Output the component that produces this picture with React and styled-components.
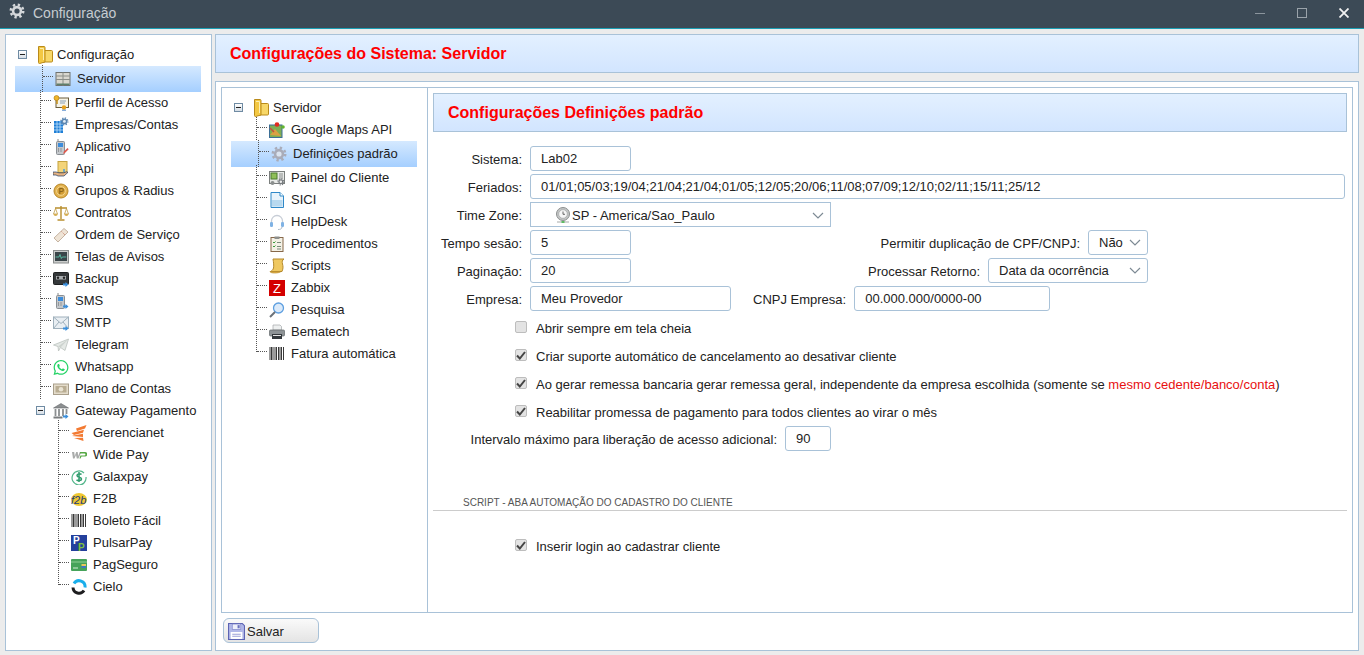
import React from "react";
import styled, { createGlobalStyle } from "styled-components";
import { FaWhatsapp } from "react-icons/fa";

const GlobalStyle = createGlobalStyle`
  html, body {
    margin: 0;
    height: 100%;
    overflow: hidden;
    background: #ececec;
    font-family: "Liberation Sans", Arial, sans-serif;
    font-size: 13px;
    color: #222;
  }
`;

const Svg = ({ children, size = 16 }) => (
  <svg width={size} height={size} viewBox="0 0 16 16">{children}</svg>
);

const Arrow = () => (
  <path d="M10 12.500h2.500V11l3 2.500-3 2.500v-1.500H10z" fill="#3b8fdc" />
);

const Gear = ({ c = "#8d93a6", hole = "#fff" }) => (
  <>
    <circle cx="8" cy="8" r="6.200" fill="none" stroke={c} strokeWidth="2.600" strokeDasharray="2.300 2.570" />
    <circle cx="8" cy="8" r="5.200" fill={c} />
    <circle cx="8" cy="8" r="2.600" fill={hole} />
  </>
);

const PhoneBody = () => (
  <>
    <path d="M5 0v3" stroke="#888" />
    <rect x="3.500" y="2.500" width="8" height="13" rx="1" fill="#c4c8cc" stroke="#8a8f94" />
    <rect x="5" y="4" width="5" height="4" fill="#3d8ddb" />
    <path d="M5 10h1m1.500 0h1m-3.500 2h1m1.500 0h1" stroke="#666" />
  </>
);

const Barcode = () => (
  <path d="M1 1v13M2.500 1v13M4 1v13M6 1v13M7.500 1v13M9.500 1v13M11 1v13M12.500 1v13M14.500 1v13" stroke="#222" strokeWidth=".9" />
);

const icons = {
  folder: (
    <svg width="16" height="18" viewBox="0 0 16 18">
      <path d="M6 4.500h8.500a1 1 0 0 1 1 1V15a1 1 0 0 1-1 1H6z" fill="#f7d768" stroke="#b98a1a" />
      <path d="M1.500.500H7a1 1 0 0 1 1 1V16l-5.500 1.500a1 1 0 0 1-1-1z" fill="#f3c843" stroke="#b98a1a" />
      <path d="M3 2.500h3.500V14" fill="none" stroke="#fdeeb0" />
    </svg>
  ),
  server: (
    <Svg>
      <rect x="1" y="1.500" width="14" height="13" fill="#d9d7cf" stroke="#6f7370" />
      <path d="M8 1.500v13M1 5h14M1 8.500h14" stroke="#8b8e88" />
      <path d="M1.500 12.500h13v1.500h-13z" fill="#5f7f6a" />
    </Svg>
  ),
  profile: (
    <Svg>
      <rect x="3" y="3" width="12.500" height="9.500" fill="#f6f3e6" stroke="#6b5d3c" />
      <path d="M7 6h6M7 8h5" stroke="#8aa0b8" />
      <circle cx="3.500" cy="3" r="2.500" fill="#f0b62a" stroke="#a8760e" strokeWidth=".6" />
      <path d="M4 5v4" stroke="#c48f19" strokeWidth="1.500" />
      <circle cx="11" cy="12.500" r="2.200" fill="#e8a21c" />
      <path d="M10 14.500v1.500m2-1.500v1.500" stroke="#3978c4" strokeWidth="1.200" />
    </Svg>
  ),
  company: (
    <Svg>
      <rect x="1" y="4" width="9" height="12" fill="#1f7fd6" />
      <path d="M1 7h9M1 10h9M1 13h9M4 4v12M7 4v12" stroke="#bfe0fa" strokeWidth=".8" />
      <g transform="translate(7 0) scale(.55)"><Gear c="#5c86b0" hole="#dfeaf4" /></g>
    </Svg>
  ),
  app: (
    <Svg>
      <PhoneBody />
      <path d="M10 15l1-2.500 3.500-3.500 1.200 1.200-3.500 3.500z" fill="#e0574b" />
    </Svg>
  ),
  api: (
    <Svg>
      <rect x="5" y="0.500" width="9" height="11" fill="#f3d479" stroke="#c5a340" />
      <path d="M0 11h3l3 .8h4.500l3-1 1.500.5-4 3.700H5l-2-1H0z" fill="#e6b382" stroke="#203c66" strokeWidth=".7" />
      <path d="M11 8v3" stroke="#4a9cd8" strokeWidth="1.500" />
    </Svg>
  ),
  coin: (
    <Svg>
      <circle cx="8" cy="8" r="7" fill="#e2b14e" stroke="#b78625" />
      <circle cx="8" cy="8" r="4.300" fill="#d39d34" stroke="#f4d790" />
      <path d="M6.800 11V5.500h2a1.500 1.500 0 0 1 0 3h-2" fill="none" stroke="#8d661c" strokeWidth="1.100" />
    </Svg>
  ),
  scales: (
    <Svg>
      <path d="M8 1v13M4.500 15h7M2 3h12" stroke="#b98f2e" strokeWidth="1.400" />
      <path d="M2.500 3.500L.5 9h4zM13.500 3.500L11.500 9h4z" fill="none" stroke="#b98f2e" strokeWidth=".7" />
      <path d="M.5 9h4.200a2 2 0 0 1-4.200 0zM11.300 9h4.200a2 2 0 0 1-4.200 0z" fill="#d6ae52" />
    </Svg>
  ),
  ticket: (
    <Svg>
      <path d="M1 11L11 1.500l4 3.500L5 15z" fill="#efe4d6" stroke="#c6b4a2" />
      <path d="M8.500 4.500l3.500 3.500" stroke="#c9826d" strokeDasharray="1 1" />
    </Svg>
  ),
  monitor: (
    <Svg>
      <rect x=".5" y="1.500" width="15" height="12.500" fill="#c9cbca" stroke="#8b8e8e" />
      <rect x="2" y="3" width="12" height="9" fill="#3a4549" />
      <path d="M2.500 8h3.500l1-2.500 1.300 4 1-1.500h4" fill="none" stroke="#5ed0b4" strokeWidth=".8" />
    </Svg>
  ),
  backup: (
    <Svg>
      <rect x=".5" y="1.500" width="15" height="12" rx="1" fill="#35383a" stroke="#1f2122" />
      <rect x="3" y="5" width="10" height="3.500" fill="#a9adb0" />
      <circle cx="5" cy="6.700" r="1.200" fill="#222" />
      <circle cx="11" cy="6.700" r="1.200" fill="#222" />
      <Arrow />
    </Svg>
  ),
  sms: (
    <Svg>
      <PhoneBody />
      <Arrow />
    </Svg>
  ),
  smtp: (
    <Svg>
      <rect x=".5" y="2" width="15" height="11.500" fill="#e9eef2" stroke="#9fb0bc" />
      <path d="M.5 2L8 8.500 15.500 2M.5 13.500L6 7M15.500 13.500L10 7" fill="none" stroke="#9fb0bc" />
      <Arrow />
    </Svg>
  ),
  telegram: (
    <Svg>
      <path d="M.5 8L15.500 2 12 13.500 7.500 10.500 5.500 14 5 9.500z" fill="#e5e9e6" stroke="#b5bcb8" strokeWidth=".7" />
      <path d="M5 9.500L15.500 2 7.500 10.500" fill="#cdd3cf" />
    </Svg>
  ),
  money: (
    <Svg>
      <rect x=".5" y="3" width="15" height="10.500" fill="#e4dccb" stroke="#a99f8b" />
      <rect x="2.500" y="5" width="11" height="6.500" fill="#b9ad93" />
      <circle cx="8" cy="8.200" r="2.300" fill="#e9e3d3" />
    </Svg>
  ),
  bank: (
    <Svg>
      <path d="M8 .5L15.500 5h-15z" fill="#8c8f91" stroke="#66696b" strokeWidth=".6" />
      <path d="M2.500 6v7M6 6v7M10 6v7M13.500 6v5" stroke="#8c8f91" strokeWidth="1.800" />
      <path d="M.5 13.500h9v2h-9z" fill="#7a7d7f" />
      <Arrow />
    </Svg>
  ),
  gerencianet: (
    <Svg>
      <path d="M5 3.500L15.500 0l-1.500 3.500-8 2.500zM.5 8L13 4.800 12 7.800 3 10zM2.500 10.500L12 8.800v3.200L1 11zM3 13l9-.3.500 3.300z" fill="#f37a32" />
    </Svg>
  ),
  widepay: (
    <Svg>
      <path d="M1 5h2.200l.5 4 1.500-4h1.500l.5 4 1.500-4h1.600l-2.800 6.500H5.800L5 8l-1.500 3.500H2z" fill="#a9abaa" />
      <path d="M9 5h5a2.200 2.200 0 0 1 0 4.500h-3.500l-1 2H8.500l.9-3h4a.8.8 0 0 0 0-2H9z" fill="#56a844" />
    </Svg>
  ),
  galaxpay: (
    <Svg>
      <path d="M13 4A7 7 0 1 0 15 8" fill="none" stroke="#55b78c" strokeWidth="1.200" />
      <path d="M10.500 5.500C9.500 4.500 6 4.500 6 6.500S10.500 8 10.500 10 7 12 5.500 10.800M8 3v10" fill="none" stroke="#2f9b6d" strokeWidth="1.500" />
    </Svg>
  ),
  f2b: (
    <Svg>
      <ellipse cx="8" cy="8.500" rx="8" ry="6.500" fill="#efc731" />
      <text x="0" y="13" fontSize="11" fontStyle="italic" fontFamily="Liberation Sans" fill="#1d3b7a">f2b</text>
    </Svg>
  ),
  barcode: (
    <Svg><Barcode /></Svg>
  ),
  pulsar: (
    <Svg>
      <rect width="16" height="16" fill="#24409c" />
      <text x="2" y="9" fontSize="10" fontWeight="700" fontFamily="Liberation Sans" fill="#fff">P</text>
      <text x="7" y="15.500" fontSize="10" fontWeight="700" fontFamily="Liberation Sans" fill="#7ec23c">P</text>
    </Svg>
  ),
  pagseguro: (
    <Svg>
      <rect y="2" width="16" height="12" rx="1" fill="#46a35a" />
      <path d="M0 5h16" stroke="#8ecf94" />
      <path d="M2 11h5" stroke="#d3efd6" />
      <rect x="10.500" y="7" width="4.500" height="2" fill="#e9c75b" />
      <rect x="10.500" y="9" width="4.500" height="2" fill="#3e78c0" />
    </Svg>
  ),
  cielo: (
    <Svg>
      <path d="M2 8.500A6 6 0 0 0 13 11.500" fill="none" stroke="#1d1d1f" strokeWidth="3" />
      <path d="M3 4.500A6 6 0 0 1 14 8.500" fill="none" stroke="#19aeeb" strokeWidth="3" />
    </Svg>
  ),
  maps: (
    <Svg>
      <rect x=".5" y="3" width="12.500" height="12.500" fill="#7fae54" stroke="#3c6f96" />
      <path d="M1 13l5-6 6 7z" fill="#d9a144" />
      <path d="M1 6l4 4" stroke="#c94d3c" strokeWidth="1.500" />
      <circle cx="8" cy="2.500" r="2.300" fill="#e02b20" />
      <circle cx="14" cy="5" r="1.800" fill="#62b52e" />
    </Svg>
  ),
  gear: (
    <Svg size={18}><Gear c="#a9acb9" hole="#dbe4f0" /></Svg>
  ),
  panel: (
    <Svg>
      <rect x=".5" y="1.500" width="15" height="12" fill="#e8eae8" stroke="#7b7f7d" />
      <rect x="2" y="3" width="6" height="6" fill="#8fbf58" stroke="#4b7b2c" />
      <path d="M10 4h4M10 6h4M10 8h4" stroke="#8b8f8e" />
      <g transform="translate(8 8) scale(.48)"><Gear c="#777b7f" hole="#eee" /></g>
      <circle cx="3.500" cy="13" r="2" fill="#8b8f8e" />
    </Svg>
  ),
  doc: (
    <Svg>
      <path d="M2 .5h9l3.500 3.500v11.500H2z" fill="#e8f3fb" stroke="#2f88c8" />
      <path d="M3 8h10.500v6.500H3z" fill="#b8d9ef" />
      <path d="M11 .5V4h3.500" fill="#fff" stroke="#2f88c8" />
    </Svg>
  ),
  headset: (
    <Svg>
      <path d="M2.500 9V7a5.500 5.500 0 0 1 11 0v2" fill="none" stroke="#c7cdd6" strokeWidth="1.300" />
      <rect x="1" y="8" width="3" height="5" rx="1.200" fill="#7fb2e4" />
      <rect x="12" y="8" width="3" height="5" rx="1.200" fill="#7fb2e4" />
      <path d="M13 13c0 2-2 2.500-4 2.500" fill="none" stroke="#a9b7c6" />
    </Svg>
  ),
  clipboard: (
    <Svg>
      <rect x="2" y="1.500" width="12" height="14" fill="#f4f1e6" stroke="#87684a" />
      <rect x="5.500" y=".5" width="5" height="2.500" fill="#8d8f8c" />
      <path d="M4 6l1 1 1.500-1.500M4 10l1 1 1.500-1.500" fill="none" stroke="#3b9b3b" />
      <path d="M8 6.500h4M8 10.500h4M8 13h4" stroke="#7a8a7a" />
    </Svg>
  ),
  script: (
    <Svg>
      <path d="M4 1h11c-2 1-2 3-1.500 5s1 4-.5 7.500H1.500c1.500-1 2.500-1.500 3-3.500S4.500 4 4 1z" fill="#efc860" stroke="#b5892b" />
      <path d="M1 13.500c0 2 9 2 11 0z" fill="#e5b44a" stroke="#b5892b" strokeWidth=".7" />
    </Svg>
  ),
  zabbix: (
    <Svg>
      <rect width="16" height="16" fill="#d40000" />
      <text x="8" y="13" textAnchor="middle" fontSize="13" fontFamily="Liberation Sans" fill="#fff">Z</text>
    </Svg>
  ),
  search: (
    <Svg>
      <circle cx="9.500" cy="6" r="5" fill="#dbeafa" stroke="#5d9fe0" strokeWidth="1.300" />
      <path d="M6 10l-5 5" stroke="#6b7178" strokeWidth="2" />
    </Svg>
  ),
  printer: (
    <Svg>
      <path d="M4 1h7l1.500 1.500V6H4z" fill="#eef0f0" stroke="#a3a7a9" strokeWidth=".7" />
      <rect x=".5" y="6" width="15" height="6" rx="1" fill="#8e9396" stroke="#62676a" strokeWidth=".7" />
      <rect x="3" y="10" width="10" height="5" fill="#33383c" />
      <path d="M4 11.500h8" stroke="#e6e6e6" />
    </Svg>
  ),
  clock: (
    <Svg>
      <circle cx="8" cy="7" r="6.500" fill="#c4c6c6" stroke="#8c8f8f" />
      <circle cx="8" cy="7" r="4.300" fill="#f6f6f6" stroke="#9a9d9d" strokeWidth=".6" />
      <path d="M8 4.500V7.300h2" fill="none" stroke="#444" strokeWidth=".8" />
      <path d="M2 15h12" stroke="#a6a9a9" />
      <path d="M6.500 15h3" stroke="#42b549" strokeWidth="1.600" />
    </Svg>
  ),
  save: (
    <Svg size={17}>
      <path d="M.5.500h13l2 2v13H.5z" fill="#b0b7e8" stroke="#5d64b4" />
      <rect x="4" y="1" width="8" height="5" fill="#eef0fb" stroke="#7c83c8" strokeWidth=".6" />
      <rect x="9" y="2" width="2" height="3" fill="#6970be" />
      <rect x="2.500" y="8.500" width="11" height="6.500" fill="#fff" />
      <path d="M4 10.500h8M4 12.500h8" stroke="#9aa0d8" />
    </Svg>
  ),
};

const mainTree = [
  { icon: "server", label: "Servidor", selected: true },
  { icon: "profile", label: "Perfil de Acesso" },
  { icon: "company", label: "Empresas/Contas" },
  { icon: "app", label: "Aplicativo" },
  { icon: "api", label: "Api" },
  { icon: "coin", label: "Grupos & Radius" },
  { icon: "scales", label: "Contratos" },
  { icon: "ticket", label: "Ordem de Serviço" },
  { icon: "monitor", label: "Telas de Avisos" },
  { icon: "backup", label: "Backup" },
  { icon: "sms", label: "SMS" },
  { icon: "smtp", label: "SMTP" },
  { icon: "telegram", label: "Telegram" },
  { icon: "whatsapp", label: "Whatsapp" },
  { icon: "money", label: "Plano de Contas" },
];

const gateways = [
  { icon: "gerencianet", label: "Gerencianet" },
  { icon: "widepay", label: "Wide Pay" },
  { icon: "galaxpay", label: "Galaxpay" },
  { icon: "f2b", label: "F2B" },
  { icon: "barcode", label: "Boleto Fácil" },
  { icon: "pulsar", label: "PulsarPay" },
  { icon: "pagseguro", label: "PagSeguro" },
  { icon: "cielo", label: "Cielo" },
];

const serverTree = [
  { icon: "maps", label: "Google Maps API" },
  { icon: "gear", label: "Definições padrão", selected: true },
  { icon: "panel", label: "Painel do Cliente" },
  { icon: "doc", label: "SICI" },
  { icon: "headset", label: "HelpDesk" },
  { icon: "clipboard", label: "Procedimentos" },
  { icon: "script", label: "Scripts" },
  { icon: "zabbix", label: "Zabbix" },
  { icon: "search", label: "Pesquisa" },
  { icon: "printer", label: "Bematech" },
  { icon: "barcode", label: "Fatura automática" },
];

const Window = styled.div`
  height: 100vh;
  display: flex;
  flex-direction: column;
`;

const TitleBar = styled.header`
  box-sizing: border-box;
  height: 29px;
  flex: none;
  display: flex;
  align-items: center;
  background: #3c4a56;
  border-bottom: 1px solid #1c9fb4;
  color: #c6ccd1;
  font-size: 14px;
  padding: 0 15px 2px 9px;
`;

const TitleIcon = styled.span`
  display: flex;
  margin: -4px 8px 0 0;
`;

const TitleText = styled.span`
  flex: 1;
`;

const WinButtons = styled.div`
  display: flex;
  gap: 32px;
`;

const WinButton = styled.span`
  width: 10px;
  height: 10px;
  display: flex;
`;

const Body = styled.div`
  flex: 1;
  min-height: 0;
  display: flex;
  gap: 3px;
  padding: 5px 5px 4px 5px;
`;

const Sidebar = styled.aside`
  width: 207px;
  flex: none;
  box-sizing: border-box;
  border: 1px solid #a9c2d8;
  background: #fff;
  padding: 8px 10px 0 9px;
`;

const Main = styled.main`
  flex: 1;
  display: flex;
  flex-direction: column;
  min-width: 0;
`;

const Banner = styled.div`
  display: flex;
  align-items: center;
  box-sizing: border-box;
  flex: none;
  height: ${(p) => p.$height}px;
  padding-left: ${(p) => p.$pad}px;
  margin-bottom: ${(p) => p.$mb || 0}px;
  border: 1px solid #a9c2d8;
  background: linear-gradient(#e3f0ff, #d2e5ff);
  color: #f00;
  font-weight: 700;
  font-size: 16px;
`;

const Panel = styled.section`
  flex: 1;
  min-height: 0;
  display: flex;
  flex-direction: column;
  box-sizing: border-box;
  border: 1px solid #a9c2d8;
  background: #fff;
  padding: 5px 5px 0;
`;

const Inner = styled.div`
  flex: 1;
  min-height: 0;
  display: flex;
  border: 1px solid #a9c2d8;
`;

const TreeColumn = styled.div`
  width: 206px;
  flex: none;
  box-sizing: border-box;
  border-right: 1px solid #a9c2d8;
  padding: 8px 10px 0 9px;
`;

const Content = styled.div`
  flex: 1;
  min-width: 0;
  padding: 5px 5px 0 5px;
`;

const TreeRow = styled.div`
  position: relative;
  box-sizing: border-box;
  display: flex;
  align-items: center;
  height: ${(p) => (p.$selected ? 26 : 22)}px;
  margin: ${(p) => (p.$selected ? "1px 0 -1px" : 0)};
  padding-top: ${(p) => (p.$selected ? 0 : 2)}px;
  padding-left: ${(p) => p.$indent + (p.$selected ? 2 : 0)}px;
  background: ${(p) =>
    p.$selected ? "linear-gradient(#d5e9ff, #a5cfff)" : "transparent"};
  line-height: 22px;
  white-space: nowrap;
  color: #222;

  ${(p) =>
    p.$line !== undefined &&
    `
    &::before {
      content: "";
      position: absolute;
      left: ${p.$line + (p.$selected ? 2 : 0)}px;
      top: -1px;
      height: ${p.$last ? "11px" : "calc(100% + 1px)"};
      border-left: 1px dotted #555;
    }
    &::after {
      content: "";
      position: absolute;
      left: ${p.$line + 1 + (p.$selected ? 2 : 0)}px;
      top: ${p.$selected ? 10 : 9}px;
      width: 10px;
      border-top: 1px dotted #555;
    }
  `}
`;

const Expander = styled.span`
  position: relative;
  box-sizing: border-box;
  flex: none;
  width: 9px;
  height: 9px;
  margin-top: -2px;
  margin-right: ${(p) => p.$gap}px;
  border: 1px solid #6f8ba3;
  background: linear-gradient(#fff, #d5dde5);

  &::after {
    content: "";
    position: absolute;
    left: 1px;
    right: 1px;
    top: 3px;
    height: 1px;
    background: #222;
  }
`;

const IconSlot = styled.span`
  flex: none;
  width: ${(p) => p.$w || 16}px;
  margin-right: ${(p) => p.$gap || 6}px;
  display: flex;
  align-items: center;
  justify-content: center;
`;

const Form = styled.div`
  display: flex;
  flex-direction: column;
  gap: 3px;
  margin-left: -5px;
  padding-top: 14px;
`;

const Row = styled.div`
  display: flex;
  align-items: center;
  height: 25px;
  width: ${(p) => (p.$width ? `${p.$width}px` : "auto")};
`;

const Label = styled.label`
  width: ${(p) => p.$width || 94}px;
  flex: none;
  text-align: right;
  margin-right: 8px;
  white-space: nowrap;
  padding-top: 1px;
`;

const RightField = styled.div`
  margin-left: auto;
  display: flex;
  align-items: center;
`;

const InlineLabel = styled.label`
  margin: 1px 8px 0 ${(p) => p.$ml || 0}px;
  white-space: nowrap;
`;

const Input = styled.input`
  box-sizing: border-box;
  height: 25px;
  width: ${(p) => p.$width}px;
  padding: 0 10px;
  border: 1px solid #a9c2d8;
  border-radius: 3px;
  font: inherit;
  color: #222;
  outline: none;
`;

const FakeSelect = styled.div`
  box-sizing: border-box;
  height: 25px;
  width: ${(p) => p.$width}px;
  padding: ${(p) => (p.$square ? "1px 6px 0 10px" : "0 6px 1px 10px")};
  display: flex;
  align-items: center;
  border: 1px solid #a9c2d8;
  border-radius: ${(p) => (p.$square ? 0 : 3)}px;
  background: #fff;
`;

const SelectText = styled.span`
  flex: 1;
  display: flex;
  align-items: center;
  gap: 1px;
  padding-left: ${(p) => p.$pad || 0}px;
`;

const Chevron = () => (
  <svg width="12" height="7" viewBox="0 0 12 7">
    <path d="M1 1l5 5 5-5" fill="none" stroke="#7d8a94" strokeWidth="1.200" />
  </svg>
);

const CheckRow = styled.div`
  display: flex;
  align-items: center;
  height: 28px;
  padding-left: 82px;
`;

const CheckBox = styled.span`
  box-sizing: border-box;
  flex: none;
  width: 12px;
  height: 12px;
  margin: -2px 9px 0 0;
  border: 1px solid #bdbdbd;
  border-radius: 2px;
  background: #e3e3e3;
  display: flex;
  align-items: center;
  justify-content: center;
`;

const Checks = styled.div`
  display: flex;
  flex-direction: column;
  margin-top: ${(p) => p.$mt}px;
`;

const Red = styled.span`
  color: #e81010;
`;

const SectionTitle = styled.div`
  margin: 45px 0 0;
  padding: 0 0 1px 30px;
  border-bottom: 1px solid #ccc;
  font-size: 10px;
  line-height: 13px;
  color: #555;
`;

const Footer = styled.footer`
  flex: none;
  height: 37px;
  display: flex;
  align-items: center;
  padding-left: 2px;
  padding-bottom: 3px;
  box-sizing: border-box;
`;

const SaveButton = styled.button`
  box-sizing: border-box;
  width: 96px;
  height: 25px;
  display: flex;
  align-items: center;
  gap: 2px;
  padding: 2px 0 0 4px;
  border: 1px solid #a9c2d8;
  border-radius: 6px;
  background: linear-gradient(#fafafa, #e4e4e4);
  font: inherit;
  color: #222;
`;

const Tick = () => (
  <svg width="10" height="9" viewBox="0 0 10 9">
    <path d="M1 4.500L3.800 7.500 9 1" fill="none" stroke="#444" strokeWidth="2" />
  </svg>
);

const Check = ({ on = true, children }) => (
  <CheckRow>
    <CheckBox>{on && <Tick />}</CheckBox>
    <span>{children}</span>
  </CheckRow>
);

const NodeIcon = ({ name }) =>
  name === "whatsapp" ? <FaWhatsapp size={17} color="#25d366" /> : icons[name];

const Leaf = ({ item, indent, line, last }) => (
  <TreeRow $indent={indent} $line={line} $last={last} $selected={item.selected}>
    <IconSlot>
      <NodeIcon name={item.icon} />
    </IconSlot>
    {item.label}
  </TreeRow>
);

const Branch = ({ label, gap, icon, indent, w, iconGap }) => (
  <TreeRow $indent={indent}>
    <Expander $gap={gap} />
    <IconSlot $w={w} $gap={iconGap}>{icon}</IconSlot>
    {label}
  </TreeRow>
);

export default function App() {
  return (
    <Window>
      <GlobalStyle />
      <TitleBar>
        <TitleIcon>
          <Svg><Gear c="#d5d8db" hole="#3c4a56" /></Svg>
        </TitleIcon>
        <TitleText>Configuração</TitleText>
        <WinButtons>
          <WinButton>
            <svg width="10" height="10"><path d="M0 5.500h10" stroke="#8b959d" /></svg>
          </WinButton>
          <WinButton>
            <svg width="10" height="10"><rect x=".5" y=".5" width="9" height="9" fill="none" stroke="#9aa3aa" /></svg>
          </WinButton>
          <WinButton>
            <svg width="10" height="10"><path d="M.5.500l9 9m0-9l-9 9" stroke="#f2f2f2" strokeWidth="1.800" /></svg>
          </WinButton>
        </WinButtons>
      </TitleBar>
      <Body>
        <Sidebar>
          <Branch label="Configuração" indent={3} gap={10} icon={icons.folder} w={16} iconGap={4} />
          {mainTree.map((item) => (
            <Leaf key={item.label} item={item} indent={38} line={25} />
          ))}
          <Branch label="Gateway Pagamento" indent={21} gap={8} icon={icons.bank} />
          {gateways.map((item, i) => (
            <Leaf key={item.label} item={item} indent={56} line={43} last={i === gateways.length - 1} />
          ))}
        </Sidebar>
        <Main>
          <Banner $height={39} $pad={14} $mb={8}>Configurações do Sistema: Servidor</Banner>
          <Panel>
            <Inner>
              <TreeColumn>
                <Branch label="Servidor" indent={3} gap={10} icon={icons.folder} w={16} iconGap={4} />
                {serverTree.map((item, i) => (
                  <Leaf key={item.label} item={item} indent={38} line={25} last={i === serverTree.length - 1} />
                ))}
              </TreeColumn>
              <Content>
                <Banner $height={39} $pad={14}>Configurações Definições padrão</Banner>
                <Form>
                  <Row>
                    <Label>Sistema:</Label>
                    <Input $width={101} defaultValue="Lab02" readOnly />
                  </Row>
                  <Row>
                    <Label>Feriados:</Label>
                    <Input $width={815} defaultValue="01/01;05/03;19/04;21/04;21/04;01/05;12/05;20/06;11/08;07/09;12/10;02/11;15/11;25/12" readOnly />
                  </Row>
                  <Row>
                    <Label>Time Zone:</Label>
                    <FakeSelect $width={301} $square>
                      <SelectText $pad={14}>
                        {icons.clock}
                        SP - America/Sao_Paulo
                      </SelectText>
                      <Chevron />
                    </FakeSelect>
                  </Row>
                  <Row $width={720}>
                    <Label>Tempo sesão:</Label>
                    <Input $width={101} defaultValue="5" readOnly />
                    <RightField>
                      <InlineLabel>Permitir duplicação de CPF/CNPJ:</InlineLabel>
                      <FakeSelect $width={60}>
                        <SelectText>Não</SelectText>
                        <Chevron />
                      </FakeSelect>
                    </RightField>
                  </Row>
                  <Row $width={720}>
                    <Label>Paginação:</Label>
                    <Input $width={101} defaultValue="20" readOnly />
                    <RightField>
                      <InlineLabel>Processar Retorno:</InlineLabel>
                      <FakeSelect $width={160}>
                        <SelectText>Data da ocorrência</SelectText>
                        <Chevron />
                      </FakeSelect>
                    </RightField>
                  </Row>
                  <Row>
                    <Label>Empresa:</Label>
                    <Input $width={201} defaultValue="Meu Provedor" readOnly />
                    <InlineLabel $ml={22}>CNPJ Empresa:</InlineLabel>
                    <Input $width={196} defaultValue="00.000.000/0000-00" readOnly />
                  </Row>
                </Form>
                <Checks $mt={3}>
                  <Check on={false}>Abrir sempre em tela cheia</Check>
                  <Check>Criar suporte automático de cancelamento ao desativar cliente</Check>
                  <Check>
                    Ao gerar remessa bancaria gerar remessa geral, independente da empresa escolhida (somente se <Red>mesmo cedente/banco/conta</Red>)
                  </Check>
                  <Check>Reabilitar promessa de pagamento para todos clientes ao virar o mês</Check>
                </Checks>
                <Row>
                  <Label $width={344}>Intervalo máximo para liberação de acesso adicional:</Label>
                  <Input $width={46} defaultValue="90" readOnly />
                </Row>
                <SectionTitle>SCRIPT - ABA AUTOMAÇÃO DO CADASTRO DO CLIENTE</SectionTitle>
                <Checks $mt={21}>
                  <Check>Inserir login ao cadastrar cliente</Check>
                </Checks>
              </Content>
            </Inner>
            <Footer>
              <SaveButton>
                {icons.save}
                Salvar
              </SaveButton>
            </Footer>
          </Panel>
        </Main>
      </Body>
    </Window>
  );
}
